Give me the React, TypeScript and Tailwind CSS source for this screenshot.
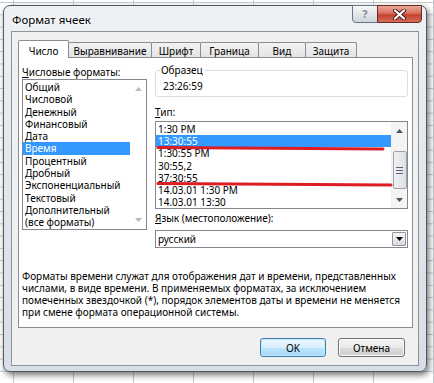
import React from "react";

const formats = [
  "Общий",
  "Числовой",
  "Денежный",
  "Финансовый",
  "Дата",
  "Время",
  "Процентный",
  "Дробный",
  "Экспоненциальный",
  "Текстовый",
  "Дополнительный",
  "(все форматы)",
];

const types = [
  "1:30 PM",
  "13:30:55",
  "1:30:55 PM",
  "30:55,2",
  "37:30:55",
  "14.03.01 1:30 PM",
  "14.03.01 13:30",
];

const tabs = [
  { label: "Выравнивание", w: "w-[84px]" },
  { label: "Шрифт", w: "w-[50px]" },
  { label: "Граница", w: "w-[59px]" },
  { label: "Вид", w: "w-[48px]" },
  { label: "Защита", w: "w-[52px]" },
];

function Arrow({ up, color }: { up?: boolean; color: string }) {
  return (
    <svg width="7" height="4" viewBox="0 0 7 4">
      <path d={up ? "M0 4 L3.5 0 L7 4 Z" : "M0 0 L7 0 L3.5 4 Z"} fill={color} />
    </svg>
  );
}

export default function App() {
  return (
    <div className="relative h-[383px] w-[434px] overflow-hidden bg-white bg-[linear-gradient(to_right,#c3c8cf_1px,transparent_1px),linear-gradient(to_bottom,#c3c8cf_1px,transparent_1px)] bg-[size:60px_12.3px] bg-[position:13px_2px] font-['Noto_Sans',sans-serif] text-[10px] text-black">
      {/* dialog window */}
      <div className="absolute left-[3px] top-[5px] flex h-[367px] w-[424px] flex-col rounded-[7px] border border-[#4f5864] bg-[linear-gradient(180deg,#eef1f4_0%,#e2e7ec_45%,#d8dee5_100%)] shadow-[2px_3px_6px_rgba(0,0,0,0.55)]">
        {/* caption buttons */}
        <div className="absolute right-[4px] top-[-1px] flex">
          <div className="flex h-[18px] w-[26px] items-center justify-center rounded-bl-[4px] border border-[#6d7682] bg-[linear-gradient(180deg,#f6f7f9_0%,#e3e7ec_50%,#cfd5dc_100%)]">
            <span className="font-['DejaVu_Sans',sans-serif] text-[11px] font-bold leading-none text-[#8a9098] [text-shadow:0_0_1px_#fff]">
              ?
            </span>
          </div>
          <div className="-ml-px flex h-[18px] w-[45px] items-center justify-center rounded-br-[4px] border border-[#6a2a22] bg-[linear-gradient(180deg,#e9a99b_0%,#d9715f_45%,#c4412f_55%,#d36c58_100%)]">
            <svg width="13" height="11" viewBox="0 0 13 11">
              <path d="M2 1.5 L11 9.5 M11 1.5 L2 9.5" stroke="#4a1a14" strokeWidth="4" strokeLinecap="round" />
              <path d="M2 1.5 L11 9.5 M11 1.5 L2 9.5" stroke="#ffffff" strokeWidth="2.2" strokeLinecap="round" />
            </svg>
          </div>
        </div>

        {/* title */}
        <div className="flex h-[25px] items-center pl-[8px] pt-[2px] text-[11.5px] text-black [text-shadow:0_0_6px_#fff,0_0_3px_#fff]">
          Формат ячеек
        </div>

        {/* client area */}
        <div className="mx-[7px] mb-[5px] flex flex-1 flex-col border border-[#8a929c] bg-[#f0f0f0]">
          {/* tabs */}
          <div className="flex items-end pl-[6px] pt-[8px]">
            <div className="relative z-10 -mb-px flex h-[18px] w-[51px] items-end justify-center rounded-t-[2px] border border-b-0 border-[#898c95] bg-white pb-[1px] leading-[12px]">
              Число
            </div>
            {tabs.map((t) => (
              <div
                key={t.label}
                className={`-ml-px flex h-[15px] ${t.w} items-end justify-center rounded-t-[2px] border border-b-0 border-[#898c95] bg-[linear-gradient(180deg,#f3f3f3,#e3e3e3)] leading-[12px]`}
              >
                {t.label}
              </div>
            ))}
          </div>

          {/* panel */}
          <div className="ml-[6px] mr-[5px] flex h-[271px] flex-col border border-[#898c95] bg-white pl-[3px]">
            <div className="flex gap-[8px]">
              {/* number formats */}
              <div className="flex w-[125px] flex-col pt-[8px]">
                <div className="h-[12px] leading-[12px]">
                  <span className="underline">Ч</span>исловые форматы:
                </div>
                <div className="mt-px flex h-[151px] border border-[#828790]">
                  <div className="flex-1 pt-px">
                    {formats.map((f) => (
                      <div
                        key={f}
                        className={`h-[12.3px] pl-[2px] leading-[12.3px] ${f === "Время" ? "bg-[#3399ff] text-white" : ""}`}
                      >
                        {f}
                      </div>
                    ))}
                  </div>
                  <div className="flex w-[16px] flex-col items-center justify-between pb-[7px] pt-[7px]">
                    <Arrow up color="#b6bcc4" />
                    <Arrow color="#b6bcc4" />
                  </div>
                </div>
              </div>

              {/* right column */}
              <div className="flex w-[253px] flex-col pt-[6px]">
                <fieldset className="h-[33px] rounded-[3px] border border-[#d5dfe5] px-[7px] pt-[4px]">
                  <legend className="-ml-[3px] px-[1px] leading-[12px]">Образец</legend>
                  <div className="leading-[12px]">23:26:59</div>
                </fieldset>

                <div className="mt-[9px] h-[12px] leading-[12px]">
                  <span className="underline">Т</span>ип:
                </div>
                <div className="relative mt-[3px] flex h-[88px] border border-[#828790]">
                  <div className="flex-1 overflow-hidden pt-px">
                    {types.map((t) => (
                      <div
                        key={t}
                        className={`h-[12.2px] pl-[2px] leading-[12.2px] ${t === "13:30:55" ? "bg-[#3399ff] text-white" : ""}`}
                      >
                        {t}
                      </div>
                    ))}
                  </div>
                  <div className="flex w-[16px] flex-col items-center border-l border-[#f0f0f0] bg-[#f4f4f4]">
                    <div className="flex h-[17px] items-center">
                      <Arrow up color="#4b5563" />
                    </div>
                    <div className="mt-[12px] flex h-[38px] w-[14px] flex-col items-center justify-center gap-[2px] rounded-[2px] border border-[#9ba3ad] bg-[linear-gradient(90deg,#f1f2f4,#dcdfe3)]">
                      <div className="h-px w-[7px] bg-[#5c6470]" />
                      <div className="h-px w-[7px] bg-[#5c6470]" />
                      <div className="h-px w-[7px] bg-[#5c6470]" />
                    </div>
                    <div className="mt-auto flex h-[17px] items-center">
                      <Arrow color="#4b5563" />
                    </div>
                  </div>
                  {/* red annotation strokes */}
                  <svg className="pointer-events-none absolute left-0 top-0" width="253" height="88" viewBox="0 0 253 88">
                    <path d="M2 25.5 Q110 26.5 227 27" stroke="#dd1c24" strokeWidth="3" strokeLinecap="round" fill="none" />
                    <path d="M2 61.5 Q120 62.5 235 63" stroke="#dd1c24" strokeWidth="3" strokeLinecap="round" fill="none" />
                  </svg>
                </div>

                <div className="mt-[3px] h-[12px] leading-[12px]">
                  <span className="underline">Я</span>зык (местоположение):
                </div>
                <div className="mt-[6px] flex h-[18px] items-center border border-[#828790] pl-[2px]">
                  <span className="flex-1">русский</span>
                  <div className="mr-px flex h-[14px] w-[14px] items-center justify-center rounded-[1px] border border-[#8f96a0] bg-[linear-gradient(180deg,#f6f6f6,#dadada)]">
                    <Arrow color="#000" />
                  </div>
                </div>
              </div>
            </div>

            <p className="mt-[22px] w-[388px] leading-[12px]">
              Форматы времени служат для отображения дат и времени, представленных
              числами, в виде времени. В применяемых форматах, за исключением
              помеченных звездочкой (*), порядок элементов даты и времени не меняется
              при смене формата операционной системы.
            </p>
          </div>

          {/* buttons */}
          <div className="mr-[13px] mt-[10px] flex justify-end gap-[12px]">
            <button className="h-[19px] w-[66px] rounded-[3px] border border-[#3c7fb1] bg-[linear-gradient(180deg,#eaf6fd_0%,#d9f0fc_50%,#bee6fd_51%,#a7d9f5_100%)] leading-none shadow-[inset_0_0_0_1px_#c8e8f9]">
              OK
            </button>
            <button className="h-[19px] w-[67px] rounded-[3px] border border-[#707070] bg-[linear-gradient(180deg,#f2f2f2_0%,#ebebeb_50%,#dddddd_51%,#cfcfcf_100%)] leading-none shadow-[inset_0_0_0_1px_#fcfcfc]">
              Отмена
            </button>
          </div>
        </div>
      </div>
    </div>
  );
}
